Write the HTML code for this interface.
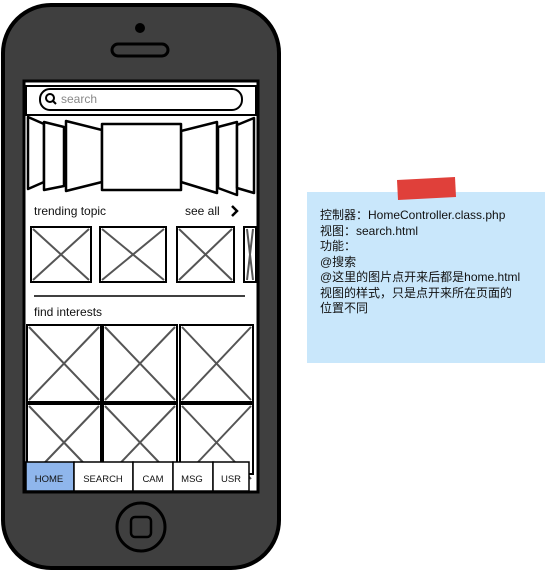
<!DOCTYPE html>
<html><head><meta charset="utf-8"><style>
body{margin:0;width:548px;height:573px;background:#fff;overflow:hidden;position:relative;font-family:"Liberation Sans","Noto Sans CJK SC",sans-serif}
.note{position:absolute;left:307px;top:192px;width:238px;height:171px;background:#c9e7fb}
.txt{position:absolute;left:320px;top:208px;font-size:12px;line-height:15.5px;color:#111;white-space:nowrap}
</style></head><body>
<svg width="548" height="573" style="position:absolute;left:0;top:0">
<rect x="3" y="5" width="276" height="563" rx="48" fill="#3f3f3f" stroke="#000" stroke-width="4"/>
<circle cx="140" cy="28" r="5" fill="#000"/>
<rect x="112" y="44" width="56" height="12" rx="6" fill="none" stroke="#000" stroke-width="3"/>
<rect x="24" y="81" width="234" height="411" fill="#fff" stroke="#000" stroke-width="3"/>
<rect x="26" y="86" width="230" height="29" fill="#fff" stroke="#000" stroke-width="2"/>
<rect x="40" y="89" width="202" height="21" rx="10" fill="#fff" stroke="#000" stroke-width="2"/>
<circle cx="50" cy="98" r="4" fill="none" stroke="#000" stroke-width="2"/>
<line x1="53" y1="101" x2="56" y2="104" stroke="#000" stroke-width="2"/>
<text x="61" y="103" font-size="12" fill="#888" font-family="Liberation Sans">search</text>
<g fill="#fff" stroke="#000" stroke-width="2.5" stroke-linejoin="round">
<polygon points="28,117 44,124 44,182 28,189"/>
<polygon points="44,122 64,127 64,186 44,190"/>
<polygon points="66,121 102,130 102,182 66,191"/>
<polygon points="181,131 217,122 217,193 181,182"/>
<polygon points="218,127 237,122 237,195 218,188"/>
<polygon points="237,125 254,118 254,193 237,188"/>
<rect x="102" y="124" width="79" height="66"/>
</g>
<text x="34" y="215" font-size="12" fill="#111">trending topic</text>
<text x="185" y="215" font-size="12" fill="#111">see all</text>
<path d="M232 206 L237 211 L232 216" fill="none" stroke="#000" stroke-width="2.5"/>
<g fill="#fff" stroke="#000" stroke-width="2">
<rect x="31" y="227" width="60" height="55"/><rect x="100" y="227" width="66" height="55"/><rect x="177" y="227" width="57" height="55"/><rect x="244" y="227" width="12" height="55"/>
<rect x="27" y="325" width="74" height="77"/><rect x="103" y="325" width="74" height="77"/><rect x="180" y="325" width="73" height="77"/>
<rect x="27" y="404" width="74" height="70"/><rect x="103" y="404" width="74" height="70"/><rect x="180" y="404" width="73" height="70"/>
</g>
<g stroke="#555" stroke-width="2">
<path d="M33 229L89 280M89 229L33 280M102 229L164 280M164 229L102 280M179 229L232 280M232 229L179 280M247 229L253 280M253 229L247 280"/>
<path d="M29 327L99 400M99 327L29 400M105 327L175 400M175 327L105 400M182 327L251 400M251 327L182 400"/>
<path d="M29 406L99 479M99 406L29 479M105 406L175 479M175 406L105 479M182 406L251 479M251 406L182 479"/>
</g>
<line x1="34" y1="296" x2="245" y2="296" stroke="#000" stroke-width="1.5"/>
<rect x="26" y="298" width="230" height="25" fill="#fff"/>
<text x="34" y="316" font-size="12" fill="#111">find interests</text>
<rect x="26" y="462" width="48" height="29" fill="#8fb6ec" stroke="#000" stroke-width="1.5"/>
<g fill="#fff" stroke="#000" stroke-width="1.5">
<rect x="74" y="462" width="59" height="29"/><rect x="133" y="462" width="40" height="29"/><rect x="173" y="462" width="40" height="29"/><rect x="213" y="462" width="36" height="29"/>
</g>
<g font-size="9.5" fill="#111" text-anchor="middle">
<text x="49" y="482">HOME</text><text x="103" y="482">SEARCH</text><text x="153" y="482">CAM</text><text x="192" y="482">MSG</text><text x="231" y="482">USR</text>
</g>
<circle cx="141" cy="527" r="24" fill="none" stroke="#000" stroke-width="3"/>
<rect x="131" y="517" width="20" height="20" rx="4" fill="none" stroke="#000" stroke-width="2.5"/>
</svg>
<div class="note"></div>
<svg width="548" height="573" style="position:absolute;left:0;top:0"><polygon points="397,180 455,177 456,197 398,200" fill="#e0403a"/></svg>
<div class="txt">控制器：HomeController.class.php<br>视图：search.html<br>功能：<br>@搜索<br>@这里的图片点开来后都是home.html<br>视图的样式，只是点开来所在页面的<br>位置不同</div>
</body></html>
